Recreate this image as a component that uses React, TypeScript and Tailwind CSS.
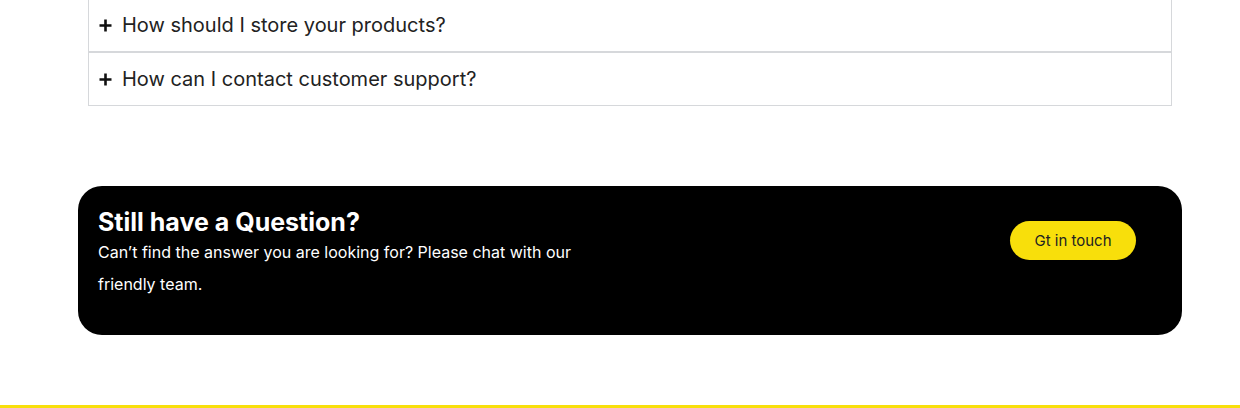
const faqs = ["How should I store your products?", "How can I contact customer support?"];

function PlusIcon() {
  return (
    <svg width="13" height="13" viewBox="0 0 13 13" className="shrink-0">
      <path d="M6.5 0.5v12M0.5 6.5h12" stroke="#111" strokeWidth="2.6" />
    </svg>
  );
}

export default function App() {
  return (
    <div className="w-[1240px] h-[408px] bg-white overflow-hidden flex flex-col" style={{ fontFamily: "Inter, 'Noto Sans', sans-serif" }}>
      <div className="ml-[88px] w-[1084px] -mt-[2px] flex flex-col">
        {faqs.map((q) => (
          <div key={q} className="h-[54px] border border-[#d6d8db] flex items-center gap-[10px] pl-[10px]">
            <PlusIcon />
            <span className="text-[20px] text-[#222] leading-none">{q}</span>
          </div>
        ))}
      </div>

      <div className="ml-[78px] w-[1104px] mt-[80px] h-[149px] bg-black rounded-[24px] flex justify-between items-start pl-[20px] pr-[46px] pt-[18px]">
        <div className="text-white">
          <h2 className="text-[25px] leading-[32px] font-bold pt-[2px] -mb-[2px]">Still have a Question?</h2>
          <p className="text-[16px] leading-[32px] max-w-[490px]">
            Can’t find the answer you are looking for? Please chat with our friendly team.
          </p>
        </div>
        <button className="mt-[17px] w-[126px] h-[39px] rounded-full bg-[#f8df0b] text-[15px] text-[#222] pt-[1px]">
          Gt in touch
        </button>
      </div>

      <div className="mt-auto h-[3px] bg-[#f8df0b]" />
    </div>
  );
}
